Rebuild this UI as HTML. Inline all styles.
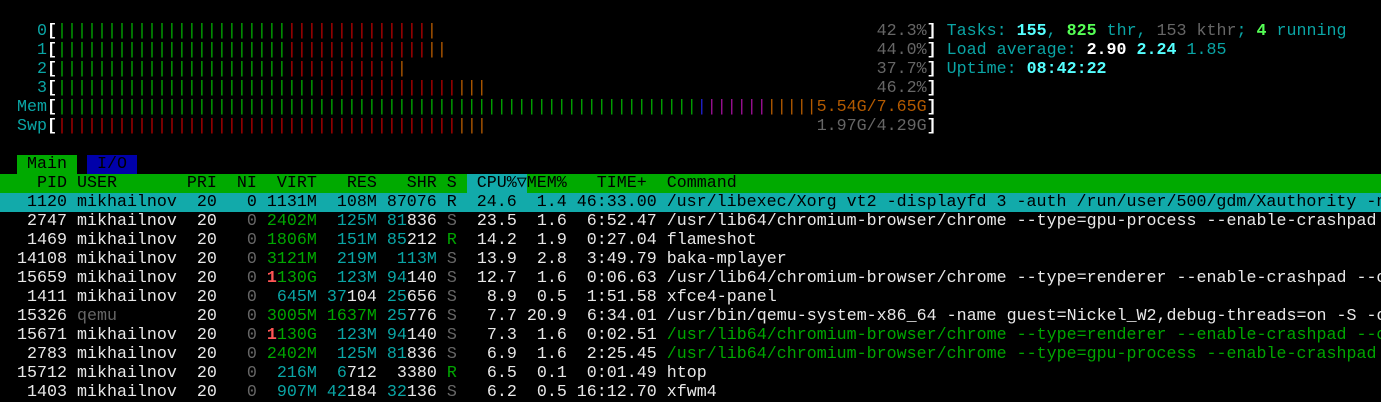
<!DOCTYPE html>
<html><head><meta charset="utf-8"><style>
html,body{margin:0;padding:0;background:#000;width:1381px;height:400px;overflow:hidden}
#t{position:absolute;left:-3px;top:2.5px;font-family:"Liberation Mono","DejaVu Sans Mono",monospace;font-size:16.667px;color:#e8e8e8;width:1400px}
.l{height:19px;line-height:19px;white-space:pre;overflow:hidden}
.g{color:#00a600}.r{color:#b00000}.o{color:#b35a00}.c{color:#0aa5a5}.k{color:#666}.b{color:#2020d0}.m{color:#a0109a}
.C{color:#55ffff;font-weight:bold}.G{color:#55ff55;font-weight:bold}.W{color:#fff;font-weight:bold}.br{color:#fff;font-weight:bold}
.hd{background:#00aa00;color:#000}.sel{background:#12aaaa;color:#000}
.tm{background:#00aa00;color:#000}.ti{background:#0000aa;color:#000}.hc{background:#12aaaa}
.tri{display:inline-block;width:10px;text-align:center}
</style></head><body><div id="t">
<div class="l"> </div>
<div class="l">    <span class="c">0</span><span class="br">[</span><span class="g">|||||||||||||||||||||||</span><span class="r">||||||||||||||</span><span class="o">|</span>                                            <span class="k">42.3%</span><span class="br">]</span> <span class="c">Tasks: </span><span class="C">155</span><span class="c">, </span><span class="G">825</span><span class="c"> thr, </span><span class="k">153 kthr</span><span class="c">; </span><span class="G">4</span><span class="c"> running</span></div>
<div class="l">    <span class="c">1</span><span class="br">[</span><span class="g">|||||||||||||||||||||||</span><span class="r">||||||||||||||</span><span class="o">||</span>                                           <span class="k">44.0%</span><span class="br">]</span> <span class="c">Load average: </span><span class="W">2.90 </span><span class="C">2.24 </span><span class="c">1.85</span></div>
<div class="l">    <span class="c">2</span><span class="br">[</span><span class="g">|||||||||||||||||||||||</span><span class="r">|||||||||||</span><span class="o">|</span>                                               <span class="k">37.7%</span><span class="br">]</span> <span class="c">Uptime: </span><span class="C">08:42:22</span></div>
<div class="l">    <span class="c">3</span><span class="br">[</span><span class="g">||||||||||||||||||||||||||</span><span class="r">||||||||||||||</span><span class="o">|||</span>                                       <span class="k">46.2%</span><span class="br">]</span></div>
<div class="l">  <span class="c">Mem</span><span class="br">[</span><span class="g">||||||||||||||||||||||||||||||||||||||||||||||||||||||||||||||||</span><span class="b">|</span><span class="m">||||||</span><span class="o">|||||5.54G/7.65G</span><span class="br">]</span></div>
<div class="l">  <span class="c">Swp</span><span class="br">[</span><span class="r">||||||||||||||||||||||||||||||||||||||||</span><span class="o">|||</span>                                 <span class="k">1.97G/4.29G</span><span class="br">]</span></div>
<div class="l"> </div>
<div class="l">  <span class="tm"> Main </span> <span class="ti"> I/O </span></div>
<div class="l hd">    PID USER       PRI  NI  VIRT   RES   SHR S <span class="hc"> CPU%<span class="tri">▽</span></span>MEM%   TIME+  Command                                                                    </div>
<div class="l sel">   1120 mikhailnov  20   0 1131M  108M 87076 R  24.6  1.4 46:33.00 /usr/libexec/Xorg vt2 -displayfd 3 -auth /run/user/500/gdm/Xauthority -nolisten tcp     </div>
<div class="l">   2747 mikhailnov  20 <span class="k">  0</span> <span class="g">2402M</span> <span class="c"> 125M</span> <span class="c">81</span>836 <span class="k">S</span>  23.5  1.6  6:52.47 /usr/lib64/chromium-browser/chrome --type=gpu-process --enable-crashpad --</div>
<div class="l">   1469 mikhailnov  20 <span class="k">  0</span> <span class="g">1806M</span> <span class="c"> 151M</span> <span class="c">85</span>212 <span class="g">R</span>  14.2  1.9  0:27.04 flameshot</div>
<div class="l">  14108 mikhailnov  20 <span class="k">  0</span> <span class="g">3121M</span> <span class="c"> 219M</span> <span class="c"> 113M</span> <span class="k">S</span>  13.9  2.8  3:49.79 baka-mplayer</div>
<div class="l">  15659 mikhailnov  20 <span class="k">  0</span> <span style="color:#ff5555;font-weight:bold">1</span><span class="g">130G</span> <span class="c"> 123M</span> <span class="c">94</span>140 <span class="k">S</span>  12.7  1.6  0:06.63 /usr/lib64/chromium-browser/chrome --type=renderer --enable-crashpad --cra</div>
<div class="l">   1411 mikhailnov  20 <span class="k">  0</span> <span class="c"> 645M</span> <span class="c">37</span>104 <span class="c">25</span>656 <span class="k">S</span>   8.9  0.5  1:51.58 xfce4-panel</div>
<div class="l">  15326 <span class="k">qemu      </span>  20 <span class="k">  0</span> <span class="g">3005M</span> <span class="g">1637M</span> <span class="c">25</span>776 <span class="k">S</span>   7.7 20.9  6:34.01 /usr/bin/qemu-system-x86_64 -name guest=Nickel_W2,debug-threads=on -S -obj</div>
<div class="l">  15671 mikhailnov  20 <span class="k">  0</span> <span style="color:#ff5555;font-weight:bold">1</span><span class="g">130G</span> <span class="c"> 123M</span> <span class="c">94</span>140 <span class="k">S</span>   7.3  1.6  0:02.51 <span class="g">/usr/lib64/chromium-browser/chrome --type=renderer --enable-crashpad --cra</span></div>
<div class="l">   2783 mikhailnov  20 <span class="k">  0</span> <span class="g">2402M</span> <span class="c"> 125M</span> <span class="c">81</span>836 <span class="k">S</span>   6.9  1.6  2:25.45 <span class="g">/usr/lib64/chromium-browser/chrome --type=gpu-process --enable-crashpad --</span></div>
<div class="l">  15712 mikhailnov  20 <span class="k">  0</span> <span class="c"> 216M</span>  <span class="c">6</span>712  3380 <span class="g">R</span>   6.5  0.1  0:01.49 htop</div>
<div class="l">   1403 mikhailnov  20 <span class="k">  0</span> <span class="c"> 907M</span> <span class="c">42</span>184 <span class="c">32</span>136 <span class="k">S</span>   6.2  0.5 16:12.70 xfwm4</div>
</div></body></html>
